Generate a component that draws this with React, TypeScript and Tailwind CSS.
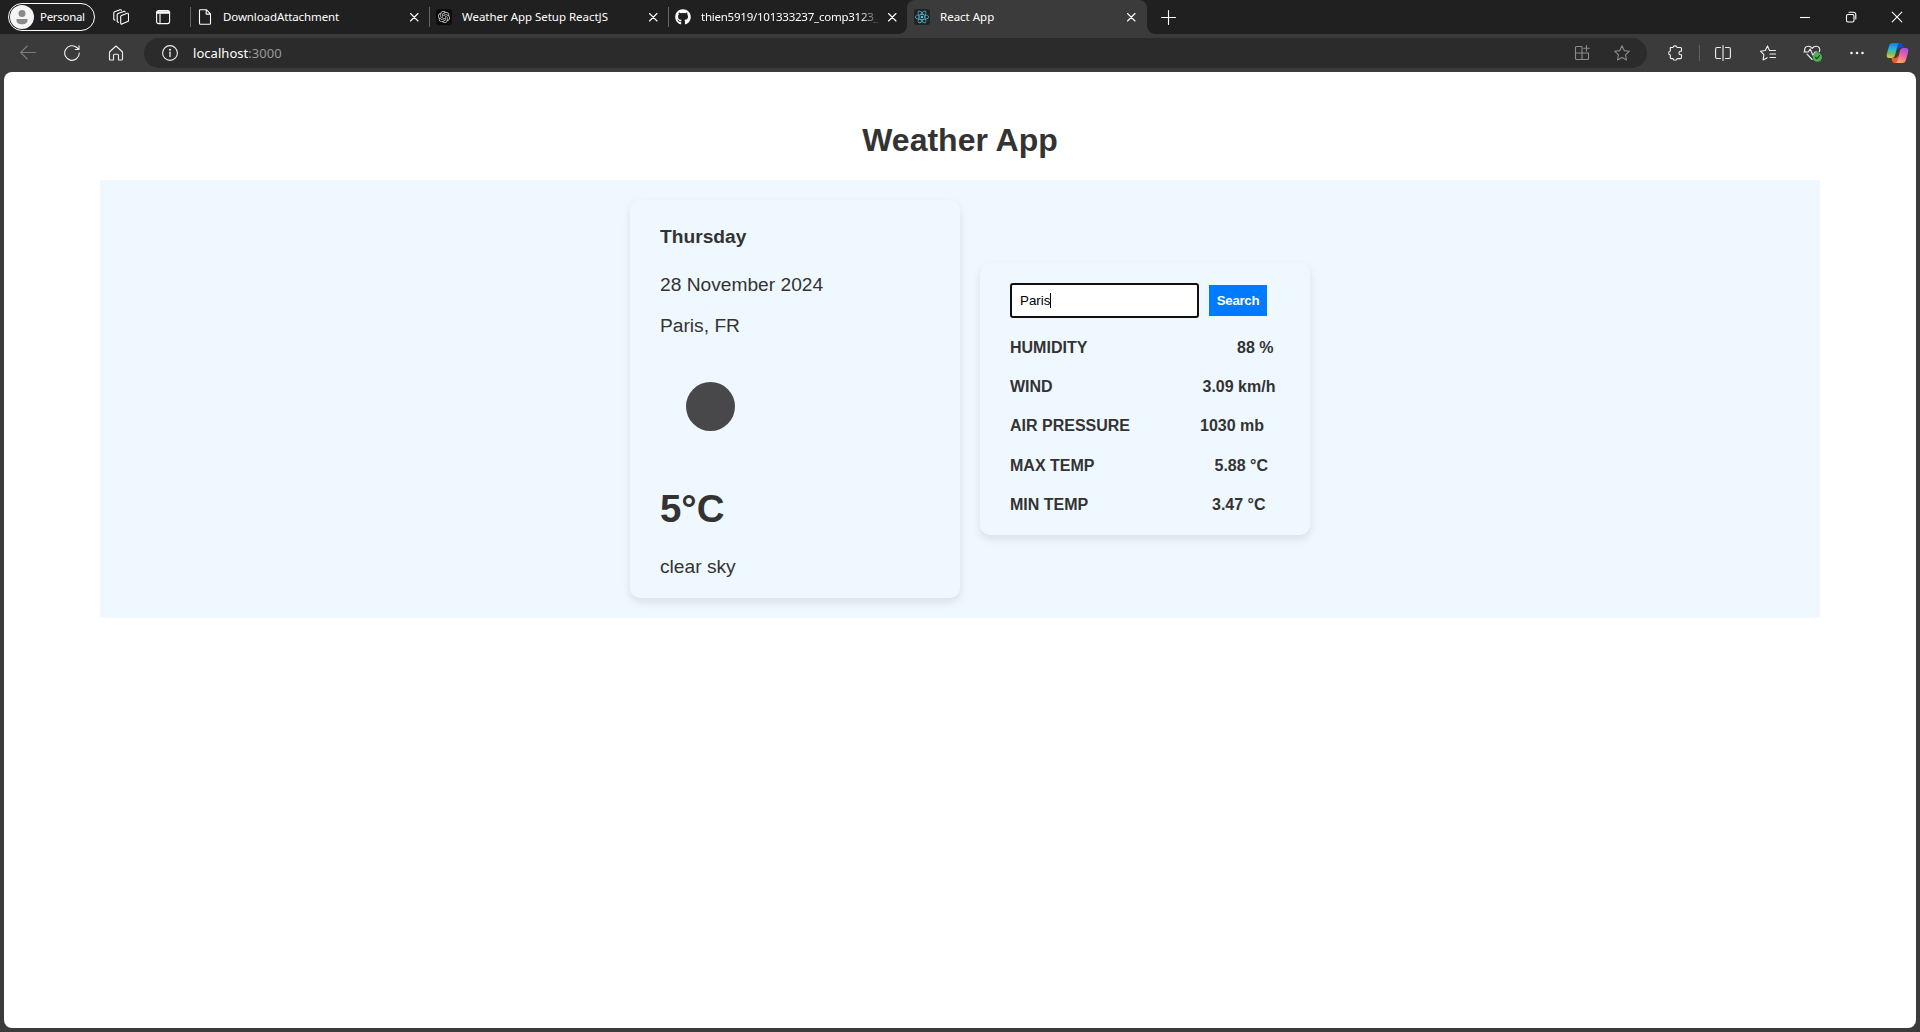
import type { ReactNode } from "react";
import { FaGithub } from "react-icons/fa";
import { SiOpenai, SiReact } from "react-icons/si";

const line = {
  fill: "none",
  stroke: "currentColor",
  strokeWidth: 1.1,
  strokeLinecap: "round" as const,
  strokeLinejoin: "round" as const,
};

function Icon({ size = 16, children, className = "" }: { size?: number; children: ReactNode; className?: string }) {
  return (
    <svg width={size} height={size} viewBox={`0 0 ${size} ${size}`} className={`shrink-0 ${className}`} {...line}>
      {children}
    </svg>
  );
}

function Cell({ className, children }: { className: string; children: ReactNode }) {
  return <div className={`flex h-full shrink-0 items-center justify-center ${className}`}>{children}</div>;
}

function CloseIcon() {
  return (
    <Icon size={10}>
      <path d="M1.500 1.500l7.500 7.500M9 1.500L1.500 9" />
    </Icon>
  );
}

function Tab({ icon, title, active = false, fade = false, spacing }: { icon: ReactNode; title: string; active?: boolean; fade?: boolean; spacing: string }) {
  return (
    <div
      className={
        active
          ? "relative flex h-[34px] w-[240px] shrink-0 items-center rounded-t-lg bg-[#3b3b3b]"
          : "relative flex h-[34px] w-[239px] shrink-0 items-center"
      }
    >
      {active ? (
        <>
          <span className="absolute -left-2 bottom-0 size-2 bg-[radial-gradient(circle_at_0_0,transparent_7.5px,#3b3b3b_8px)]" />
          <span className="absolute -right-2 bottom-0 size-2 bg-[radial-gradient(circle_at_100%_0,transparent_7.5px,#3b3b3b_8px)]" />
        </>
      ) : (
        <span className="absolute left-0 top-[7px] h-5 w-px bg-[#666]" />
      )}
      <div className="ml-[7px] flex w-4 justify-center">{icon}</div>
      <div
        className={`ml-[10px] w-[178px] whitespace-nowrap ${spacing} ${
          fade ? "[mask-image:linear-gradient(to_right,#000_160px,transparent_179px)]" : ""
        }`}
      >
        {title}
      </div>
      <div className="ml-2 flex w-[10px] justify-center">
        <CloseIcon />
      </div>
    </div>
  );
}

function TabStrip() {
  return (
    <div className="flex h-[34px] items-center bg-[#202020] text-[11.5px] leading-4 text-white">
      <div className="ml-2 flex h-7 w-[87px] items-center rounded-full border border-white pl-px">
        <svg width="24" height="24" viewBox="0 0 24 24" className="shrink-0">
          <circle cx="12" cy="12" r="12" fill="#f5f5f5" />
          <circle cx="12" cy="8.500" r="3.500" fill="#8a8a8a" />
          <path d="M6.500 14h11v1.200c0 2.600-2.300 4.100-5.500 4.100s-5.500-1.500-5.500-4.100z" fill="#8a8a8a" />
        </svg>
        <span className="ml-[6px] tracking-[-0.3px]">Personal</span>
      </div>
      <Cell className="ml-1 w-11">
        <Icon>
          <path d="M7.700 7.600c0-.6.300-1 .8-1.200l5.800-2.100c.7-.2 1.200.1 1.200.8v6.300c0 .6-.3 1-.8 1.200l-5.800 2.500c-.7.200-1.200-.1-1.200-.8z" />
          <path d="M5.500 13.200c-.8 0-1.300-.3-1.300-1V5.600c0-.6.300-1 .8-1.200l5.600-2c.8-.2 1.300 0 1.500.5" />
          <path d="M2 11c-.8 0-1.200-.4-1.200-1V3.900c0-.6.300-1 .8-1.200L7 .8c.8-.2 1.300 0 1.500.5" />
        </Icon>
      </Cell>
      <Cell className="w-10">
        <Icon>
          <rect x="1.600" y="1.600" width="13" height="13" rx="2" />
          <path d="M2.400 3h11.400M2.400 4h11.400" strokeWidth="1.700" />
          <path d="M5 5v9.500" />
        </Icon>
      </Cell>
      <div className="ml-[7px] flex">
        <Tab
          title="DownloadAttachment"
          spacing="tracking-[-0.1px]"
          icon={
            <Icon>
              <path d="M2.500 1.500c0-.4.300-.8.800-.8h6l4.200 4.200v9.300c0 .6-.4 1-1 1h-9c-.6 0-1-.4-1-1zM9.200.8v4.300h4.200" />
            </Icon>
          }
        />
        <Tab
          title="Weather App Setup ReactJS"
          spacing="tracking-[-0.03px]"
          icon={
            <span className="flex size-4 shrink-0 items-center justify-center rounded-[3px] bg-[#0c0c0c]">
              <SiOpenai size={12} color="#ccc" />
            </span>
          }
        />
        <Tab title="thien5919/101333237_comp3123_" spacing="tracking-[-0.24px]" fade icon={<FaGithub size={16} className="shrink-0" />} />
        <Tab
          active
          title="React App"
          spacing="tracking-[0px]"
          icon={
            <span className="flex size-4 shrink-0 items-center justify-center rounded-[3px] bg-[#222]">
              <SiReact size={14} color="#58c4dc" />
            </span>
          }
        />
      </div>
      <Cell className="w-[42px]">
        <Icon>
          <path d="M8.500 1.500v14M1.500 8.500h14" />
        </Icon>
      </Cell>
      <Cell className="ml-auto w-[46px]">
        <Icon size={10}>
          <path d="M0 5.500h10" strokeLinecap="butt" />
        </Icon>
      </Cell>
      <Cell className="w-[46px]">
        <Icon size={12}>
          <rect x="1.500" y="3.500" width="7.500" height="7.500" rx="1.500" />
          <path d="M4 1.300h4.500a2.300 2.300 0 0 1 2.300 2.300V8" />
        </Icon>
      </Cell>
      <Cell className="w-[46px]">
        <Icon size={12}>
          <path d="M1.200 1.200l9.600 9.600M10.800 1.200l-9.600 9.600" />
        </Icon>
      </Cell>
    </div>
  );
}

function CopilotIcon() {
  return (
    <svg width="23" height="22" viewBox="0 0 23 22" className="shrink-0">
      <defs>
        <linearGradient id="cp-left" x1="0.4" y1="0" x2="0.3" y2="1">
          <stop offset="0" stopColor="#1b7be6" />
          <stop offset="0.35" stopColor="#21b5e2" />
          <stop offset="0.7" stopColor="#6cc06a" />
          <stop offset="1" stopColor="#f2c714" />
        </linearGradient>
        <linearGradient id="cp-right" x1="0.7" y1="0" x2="0.3" y2="1">
          <stop offset="0" stopColor="#a450e8" />
          <stop offset="0.5" stopColor="#ef6698" />
          <stop offset="1" stopColor="#ffab6b" />
        </linearGradient>
      </defs>
      <path d="M11 1h3.600c1.300 0 1.900.8 2.300 2l.8 2.800h-3.400c-1.700 0-2.500.8-3 2.600z" fill="#1748c8" />
      <path d="M12 21H8.600c-1.400 0-2-.8-2.400-2l-.8-3h3.300c1.600 0 2.500-.9 3-2.600z" fill="#ee5a38" />
      <path d="M6.700 1h7.200c-1.300 0-1.800 1-2.200 2.300L9 13.300c-.5 1.800-1.500 2.700-3.200 2.700H3.200C1 16 .2 14.400.8 12L3.200 3.700C3.700 2 4.900 1 6.700 1z" fill="url(#cp-left)" />
      <path d="M16.300 21H9.100c1.300 0 1.800-1 2.200-2.300L14 8.700c.5-1.800 1.500-2.700 3.200-2.700h2.600c2.200 0 3 1.600 2.400 4l-2.400 8.300c-.5 1.700-1.700 2.700-3.500 2.700z" fill="url(#cp-right)" />
    </svg>
  );
}

function Toolbar() {
  return (
    <div className="flex h-[38px] items-center bg-[#3b3b3b] text-[#f0f0f0]">
      <Cell className="ml-[6px] w-11 text-[#7b7b7b]">
        <Icon>
          <path d="M7.200 1L.7 7.500l6.500 6.500M.9 7.500h14.800" />
        </Icon>
      </Cell>
      <Cell className="w-11">
        <Icon>
          <path d="M15.300 8A7.300 7.300 0 1 1 12.800 2.500l2 1.800M15 .8v3.700h-3.800" />
        </Icon>
      </Cell>
      <Cell className="w-11">
        <Icon>
          <path d="M1.500 7L8 1l6.500 6v7.300c0 .4-.3.700-.7.700H10.500v-4.800a1 1 0 0 0-1-1h-3a1 1 0 0 0-1 1V15H2.200a.7.700 0 0 1-.7-.7z" />
        </Icon>
      </Cell>
      <div className="ml-[6px] flex h-[30px] w-[1503px] items-center rounded-full bg-[#2b2b2b]">
        <Icon className="ml-[18px]">
          <circle cx="8" cy="8" r="7.400" />
          <path d="M8 7.200v4.300" strokeWidth="1.300" />
          <circle cx="8" cy="4.700" r="0.500" fill="currentColor" />
        </Icon>
        <div className="ml-[15px] text-[13px] leading-5 tracking-[0.04px] text-white">
          localhost<span className="text-[#9a9a9a]">:3000</span>
        </div>
        <Cell className="ml-auto w-10 text-[#8b8b8b]">
          <Icon>
            <path d="M8 1.500H2.500a1 1 0 0 0-1 1v11a1 1 0 0 0 1 1h11a1 1 0 0 0 1-1V8M1.500 8h13M8 1.500v13M12.500.5v5.500M9.800 3.300h5.400" />
          </Icon>
        </Cell>
        <Cell className="mr-[5px] w-10 text-[#8b8b8b]">
          <Icon>
            <path d="M8 .8l2.200 4.800 5.200.6-3.900 3.600 1 5.200L8 12.400 3.500 15l1-5.200L.6 6.200l5.200-.6z" />
          </Icon>
        </Cell>
      </div>
      <Cell className="ml-[6px] w-11">
        <Icon>
          <path d="M3.300 2.500H6a2.100 2.100 0 0 1 4.100 0h3.400a1 1 0 0 1 1 1v2.700h-.8a1.800 1.800 0 0 0 0 3.600h.8v2.800a1 1 0 0 1-1 1h-3.400a2.100 2.100 0 0 1-4.100 0H4.300a1 1 0 0 1-1-1V10.100a2.100 2.100 0 0 1 0-4.100z" />
        </Icon>
      </Cell>
      <div className="ml-[2px] h-4 w-px bg-[#606060]" />
      <Cell className="ml-px w-11">
        <Icon>
          <path d="M5.500 2.500H2a1.400 1.400 0 0 0-1.400 1.400v8.200A1.400 1.400 0 0 0 2 13.500h3.500M10.500 2.500H14a1.400 1.400 0 0 1 1.400 1.400v8.200a1.400 1.400 0 0 1-1.400 1.400h-3.500M8 .5v15" />
        </Icon>
      </Cell>
      <Cell className="ml-px w-11">
        <Icon>
          <path d="M9.500 5.500L7.500.9 5.300 5.500l-4.900.7 3.500 3.500-.8 5.200 4.100-2.200M9.500 5.500h6M10 9h5.500M10 12.500h5.500" />
        </Icon>
      </Cell>
      <Cell className="w-[46px]">
        <Icon size={20}>
          <path d="M2.200 9C.5 5.800 2.500 3.200 5.300 3.200c1.700 0 3 .8 3.900 2.200.9-1.400 2.200-2.200 3.900-2.200 2.800 0 4.700 2.600 3.100 5.600M4 11.200l5.200 5.300M.8 9h4.400l2-3 2.700 6.200L12 9h2" />
          <circle cx="14.400" cy="14.200" r="4.600" fill="#4caf50" stroke="none" />
          <path d="M12.400 14.300l1.400 1.400 2.700-3" stroke="#1d3b1d" />
        </Icon>
      </Cell>
      <Cell className="w-[42px]">
        <svg width="14" height="4" viewBox="0 0 14 4" fill="currentColor">
          <circle cx="1.500" cy="2" r="1.300" />
          <circle cx="7" cy="2" r="1.300" />
          <circle cx="12.500" cy="2" r="1.300" />
        </svg>
      </Cell>
      <Cell className="w-[39px]">
        <CopilotIcon />
      </Cell>
    </div>
  );
}

const readings = [
  { label: "HUMIDITY", value: "88 %", width: "w-[227px]", height: "h-[39px]" },
  { label: "WIND", value: "3.09 km/h", width: "w-[192.5px]", height: "h-[39px]" },
  { label: "AIR PRESSURE", value: "1030 mb", width: "w-[190px]", height: "h-[40px]" },
  { label: "MAX TEMP", value: "5.88 °C", width: "w-[204.5px]", height: "h-[39px]" },
  { label: "MIN TEMP", value: "3.47 °C", width: "w-[202px]", height: "h-[39px]" },
];

function WeatherPage() {
  return (
    <main className="h-[956px] overflow-hidden rounded-lg bg-white px-24 pt-12 font-['Liberation_Sans',Arial,sans-serif] text-[#333]">
      <h1 className="text-center text-[32px] font-bold leading-10">Weather App</h1>
      <section className="mt-5 flex h-[438px] items-center justify-center gap-5 bg-[#f0f8ff] pl-5">
        <article className="h-[398px] w-[330px] rounded-[10px] px-[30px] shadow-[0_4px_8px_rgba(0,0,0,0.1)]">
          <h3 className="mt-[26px] text-[19.200px] font-bold leading-[22px]">Thursday</h3>
          <p className="mt-[26px] text-[19.200px] leading-[22px]">28 November 2024</p>
          <p className="mt-[19px] text-[19.200px] leading-[22px]">Paris, FR</p>
          <div className="ml-[26px] mt-[45px] size-[49px] rounded-full bg-[#48484a]" />
          <p className="mt-[54px] text-[38.400px] font-bold leading-[48px]">5°C</p>
          <p className="mt-[23px] text-[19.200px] leading-[22px]">clear sky</p>
        </article>
        <article className="h-[272px] w-[330px] rounded-[10px] px-[30px] pt-5 shadow-[0_4px_8px_rgba(0,0,0,0.1)]">
          <div className="flex h-[35px] items-center">
            <div className="flex h-[35px] w-[189px] items-center rounded-[3px] border-2 border-[#101010] bg-white pl-2 text-[13.333px] text-black">
              Paris
              <span className="h-[15px] w-px bg-black" />
            </div>
            <button className="ml-[10px] h-[31px] w-[58px] bg-[#007bff] text-[13.333px] font-bold leading-4 tracking-[-0.35px] text-white">Search</button>
          </div>
          <div className="mt-[10px]">
            {readings.map((r) => (
              <div key={r.label} className={`flex items-center text-base font-bold ${r.height}`}>
                <span className={r.width}>{r.label}</span>
                <span>{r.value}</span>
              </div>
            ))}
          </div>
        </article>
      </section>
    </main>
  );
}

export default function App() {
  return (
    <div className="h-[1032px] w-[1920px] overflow-hidden bg-[#3b3b3b] font-['Noto_Sans','Open_Sans',sans-serif]">
      <TabStrip />
      <Toolbar />
      <div className="px-1">
        <WeatherPage />
      </div>
    </div>
  );
}
